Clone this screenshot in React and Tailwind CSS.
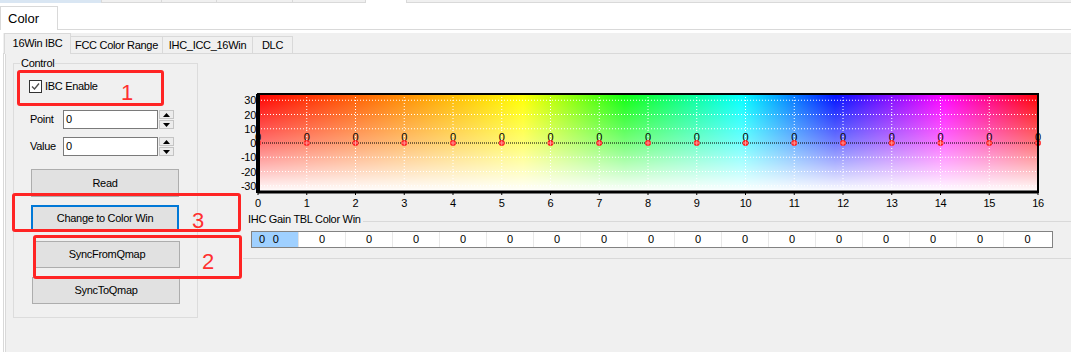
import React from 'react'

const font = "font-['Liberation_Sans',Arial,sans-serif]"

const hueStops = [
  [0, '#ff0000'],
  [0.17, '#ff8000'],
  [0.34, '#ffff00'],
  [0.47, '#10ff10'],
  [0.62, '#00ffff'],
  [0.74, '#0010ff'],
  [0.88, '#ff00ff'],
  [1, '#ff0000'],
]

const Checkbox = () => (
  <div className="w-[13px] h-[13px] border border-[#333333] bg-white flex items-center justify-center">
    <svg width="9" height="9" viewBox="0 0 9 9">
      <path d="M1 4.5 L3.5 7 L8 1.5" fill="none" stroke="#4d4d4d" strokeWidth="1.3" />
    </svg>
  </div>
)

const Spinner = () => (
  <div className="flex flex-col gap-px ml-px">
    <div className="w-[15px] h-[9px] border border-[#c4c4c4] bg-[#ececec] flex items-center justify-center">
      <svg width="7" height="4" viewBox="0 0 7 4"><path d="M0 4 L3.5 0 L7 4Z" fill="#000" /></svg>
    </div>
    <div className="w-[15px] h-[9px] border border-[#c4c4c4] bg-[#ececec] flex items-center justify-center">
      <svg width="7" height="4" viewBox="0 0 7 4"><path d="M0 0 L3.5 4 L7 0Z" fill="#000" /></svg>
    </div>
  </div>
)

const Field = ({ label, value, className }) => (
  <div className={`flex items-center ml-[16px] h-[19px] ${className}`}>
    <span className="w-[33px]">{label}</span>
    <div className="w-[95px] h-[19px] border border-[#7a7a7a] bg-white pl-[2px] leading-[16px]">{value}</div>
    <Spinner />
  </div>
)

const Chart = () => {
  const x0 = 258, x1 = 1038, y0 = 94, y1 = 192
  const xs = Array.from({ length: 17 }, (_, i) => x0 + (i * (x1 - x0)) / 16)
  const yv = (v) => 143 - v * 1.425
  const ticks = [30, 20, 10, 0, -10, -20, -30]
  return (
    <svg width="820" height="124" viewBox="230 88 820 124" className="block">
      <defs>
        <linearGradient id="hue" x1="0" y1="0" x2="1" y2="0">
          {hueStops.map(([o, c]) => <stop key={o} offset={o} stopColor={c} />)}
        </linearGradient>
        <linearGradient id="fade" x1="0" y1="0" x2="0" y2="1">
          <stop offset="0" stopColor="#fff" stopOpacity="0" />
          <stop offset="0.5" stopColor="#fff" stopOpacity="0.45" />
          <stop offset="1" stopColor="#fff" stopOpacity="1" />
        </linearGradient>
      </defs>
      <rect x={x0} y={y0} width={x1 - x0} height={y1 - y0} fill="url(#hue)" />
      <rect x={x0} y={y0} width={x1 - x0} height={y1 - y0} fill="url(#fade)" />
      {ticks.filter((t) => t !== 0).map((t) => (
        <line key={t} x1={x0} x2={x1} y1={yv(t)} y2={yv(t)} stroke="#fff" strokeDasharray="1 2" />
      ))}
      {xs.slice(1, 16).map((x) => (
        <line key={x} x1={x} x2={x} y1={y0} y2={y1} stroke="#fff" strokeDasharray="1 2" />
      ))}
      <line x1={x0} x2={x1} y1={143} y2={143} stroke="#000" strokeDasharray="1 1" />
      {xs.map((x) => (
        <g key={x}>
          <text x={x} y={141} fontSize="11" textAnchor="middle" fill="#000">0</text>
          <circle cx={x} cy={143} r="3" fill="#ff2020" />
          <path d={`M${x - 2.5} 143h5M${x} 140.5v5`} stroke="#ff9a9a" strokeWidth="1" />
        </g>
      ))}
      <rect x={x0} y={y0} width={x1 - x0} height={y1 - y0} fill="none" stroke="#000" strokeWidth="2" />
      <line x1={x0} x2={x0} y1={y0} y2={y1 + 1} stroke="#000" strokeWidth="4" />
      <line x1={x0} x2={x1} y1={y1} y2={y1} stroke="#000" strokeWidth="3" />
      {xs.map((x) => (
        <line key={x} x1={x} x2={x} y1={y1} y2={y1 + 3} stroke="#000" />
      ))}
      {ticks.map((t) => (
        <text key={t} x={256} y={yv(t) + 4} fontSize="11" textAnchor="end" fill="#000">{t}</text>
      ))}
      {xs.map((x, i) => (
        <text key={x} x={x} y={207} fontSize="11" textAnchor="middle" fill="#000">{i}</text>
      ))}
    </svg>
  )
}

const Button = ({ children, className }) => (
  <div className={`flex items-center justify-center bg-[#e1e1e1] ${className}`}>{children}</div>
)

export default function App() {
  const cells = Array.from({ length: 16 })
  return (
    <div className={`relative w-[1071px] h-[352px] overflow-hidden bg-white text-black text-[11px] tracking-[-0.3px] ${font}`}>
      {/* cut-off tab bar of the parent window */}
      <div className="flex h-[3px]">
        <div className="w-[102px] bg-[#d9e6f3] border-r border-[#d9d9d9]" />
        <div className="w-[60px] bg-[#f0f0f0] border-r border-b border-[#d9d9d9]" />
        <div className="w-[55px] bg-[#f0f0f0] border-r border-b border-[#d9d9d9]" />
        <div className="w-[76px] bg-[#f0f0f0] border-r border-b border-[#d9d9d9]" />
        <div className="w-[73px] bg-[#f0f0f0] border-r border-b border-[#d9d9d9]" />
        <div className="w-[41px] bg-white border-r border-[#d9d9d9]" />
        <div className="flex-1 bg-[#f0f0f0] border-b border-[#d9d9d9]" />
      </div>

      <div className="flex items-end h-[27px] border-b border-[#d9d9d9]">
        <div className="h-[24px] w-[58px] -mb-px border border-b-0 border-[#d9d9d9] bg-white pl-[7px] text-[13px] tracking-normal leading-[23px]">
          Color
        </div>
      </div>

      <div className="pt-[3px] pl-[3px]">
        <div className="flex items-end h-[21px] border-b border-[#d9d9d9] bg-[#f0f0f0] pl-px">
          <div className="h-[21px] -mb-px w-[67px] border border-b-0 border-[#d9d9d9] bg-[#f0f0f0] flex items-center justify-center pb-[2px]">
            16Win IBC
          </div>
          <div className="h-[17px] w-[92px] border-t border-r border-[#d9d9d9] flex items-center justify-center">FCC Color Range</div>
          <div className="h-[17px] w-[90px] border-t border-r border-[#d9d9d9] flex items-center justify-center">IHC_ICC_16Win</div>
          <div className="h-[17px] w-[40px] border-t border-r border-[#d9d9d9] flex items-center justify-center">DLC</div>
        </div>

        <div className="border-l border-[#d9d9d9] pl-px">
          <div className="flex items-start h-[298px] border-l border-[#d9d9d9] bg-[#f0f0f0]">
            {/* Control group */}
            <div className="ml-[7px] mt-[9px] w-[185px] h-[255px] border border-[#dcdcdc]">
              <div className="-mt-[8px] ml-[6px] w-fit px-px bg-[#f0f0f0] leading-[14px]">Control</div>
              <div className="mt-[10px] ml-[15px] flex items-center h-[13px] gap-[3px]">
                <Checkbox />
                <span>IBC Enable</span>
              </div>
              <Field label="Point" value="0" className="mt-[17px]" />
              <Field label="Value" value="0" className="mt-[8px]" />
              <Button className="mt-[13px] ml-[17px] w-[148px] h-[28px] border border-[#adadad]">Read</Button>
              <Button className="mt-[8px] ml-[17px] w-[148px] h-[26px] border-2 border-[#0078d7]">Change to Color Win</Button>
              <Button className="mt-[10px] ml-[20px] w-[146px] h-[27px] border border-[#adadad]">SyncFromQmap</Button>
              <Button className="mt-[9px] ml-[18px] w-[148px] h-[27px] border border-[#adadad]">SyncToQmap</Button>
            </div>

            {/* chart and gain table */}
            <div className="ml-[32px] mt-[34px] flex-1 min-w-0">
              <Chart />
              <div className="ml-[13px] pb-[10px] border-b border-[#d9d9d9]">
                <div className="flex h-[14px]">
                  <span className="ml-[5px] leading-[14px] whitespace-nowrap">IHC Gain TBL Color Win</span>
                  <div className="flex-1 h-px mt-[9px] ml-[2px] bg-[#d9d9d9]" />
                </div>
                <div className="mt-[5px] ml-[8px] w-[802px] h-[17px] border border-[#828282] bg-white flex">
                  <div className="w-[47px] h-full bg-[#9fd0ff] flex items-center pl-[7px] gap-[8px] border-r border-[#e4e4e4]">
                    <span>0</span>
                    <span>0</span>
                  </div>
                  {cells.map((_, i) => (
                    <div key={i} className="w-[47px] h-full flex items-center justify-center border-r border-[#e8e8e8] last:border-r-0">
                      0
                    </div>
                  ))}
                </div>
              </div>
            </div>
          </div>
        </div>
      </div>

      {/* red annotation marks */}
      <div className="absolute left-[17px] top-[70px] w-[147px] h-[36px] border-[3px] border-[#ff2424] rounded-[3px]" />
      <div className="absolute left-[12px] top-[193px] w-[229px] h-[39px] border-[3px] border-[#ff2424] rounded-[3px]" />
      <div className="absolute left-[33px] top-[235px] w-[209px] h-[44px] border-[3px] border-[#ff2424] rounded-[3px]" />
      <span className="absolute left-[121px] top-[82px] text-[22px] leading-[22px] tracking-normal text-[#ff3030]">1</span>
      <span className="absolute left-[192px] top-[210px] text-[22px] leading-[22px] tracking-normal text-[#ff3030]">3</span>
      <span className="absolute left-[202px] top-[251px] text-[22px] leading-[22px] tracking-normal text-[#ff3030]">2</span>
    </div>
  )
}
